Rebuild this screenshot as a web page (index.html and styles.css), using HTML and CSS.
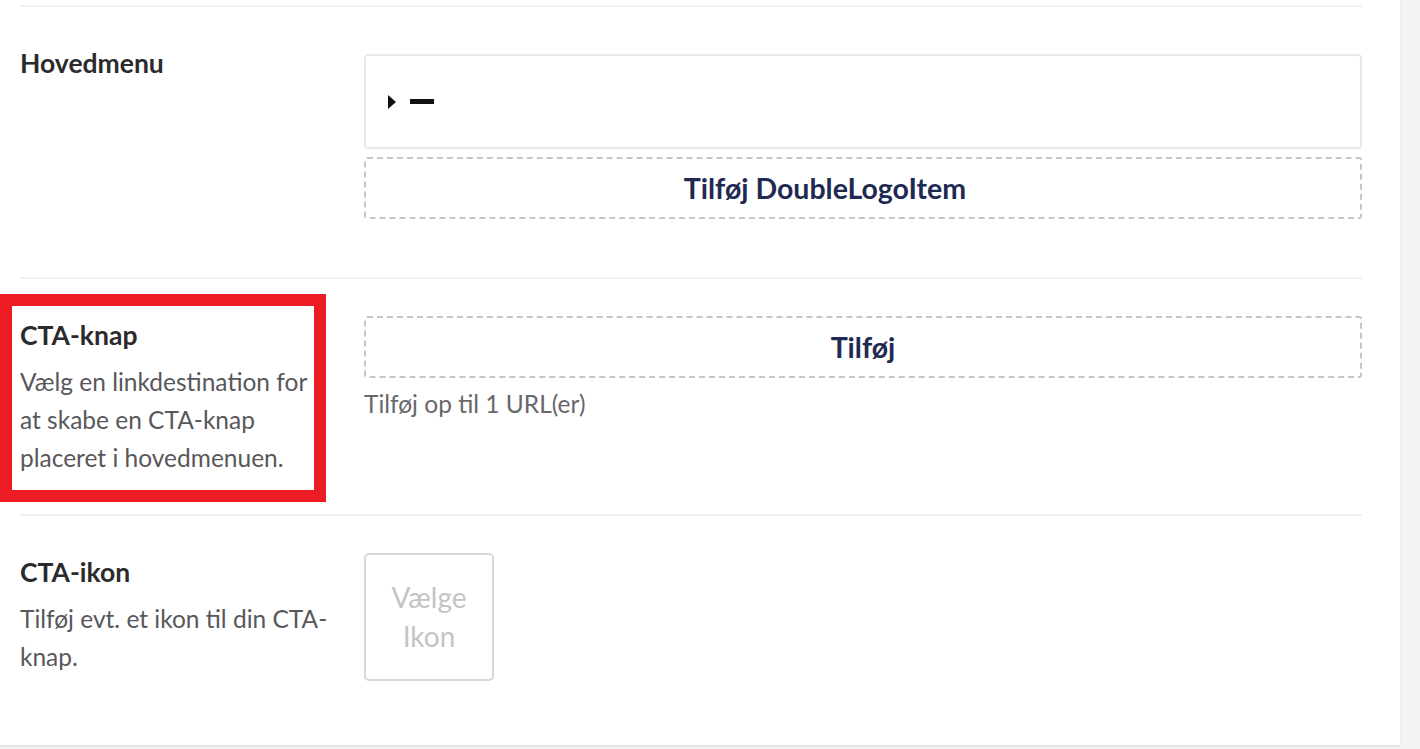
FILE: index.html
```html
<!DOCTYPE html>
<html lang="da">
<head>
<meta charset="utf-8">
<title>Hovedmenu</title>
<link rel="stylesheet" href="styles.css">
</head>
<body>
<div class="panel">
  <div class="rows">
    <div class="row row-first">
      <div class="label-col">
        <div class="label">Hovedmenu</div>
      </div>
      <div class="control-col">
        <div class="nested-box">
          <span class="caret"></span>
          <span class="bar"></span>
        </div>
        <button class="add-btn add-btn-offset">Tilføj DoubleLogoItem</button>
      </div>
    </div>
    <div class="row row-cta">
      <div class="label-col">
        <div class="label">CTA-knap</div>
        <div class="desc">Vælg en linkdestination for at skabe en CTA-knap placeret i hovedmenuen.</div>
      </div>
      <div class="control-col">
        <button class="add-btn">Tilføj</button>
        <div class="help">Tilføj op til 1 URL(er)</div>
      </div>
      <div class="highlight"></div>
    </div>
    <div class="row row-last">
      <div class="label-col">
        <div class="label">CTA-ikon</div>
        <div class="desc">Tilføj evt. et ikon til din CTA-knap.</div>
      </div>
      <div class="control-col">
        <button class="icon-btn">Vælge Ikon</button>
      </div>
    </div>
  </div>
</div>
</body>
</html>
```

FILE: styles.css
```css
* { box-sizing: border-box; }
html, body {
  margin: 0;
  padding: 0;
  height: 100%;
}
body {
  background: #f4f2f2;
  font-family: Lato, "Open Sans", sans-serif;
  color: #1b1b1b;
  overflow: hidden;
}
.panel {
  width: 1401px;
  height: 747px;
  background: #fff;
  border-bottom: 2px solid #e4e4e4;
  border-right: 1px solid #ececec;
  border-bottom-right-radius: 4px;
  padding: 5px 38px 0 20px;
}
.rows {
  border-top: 2px solid #f1f1f1;
}
.row {
  position: relative;
  display: flex;
  border-bottom: 2px solid #f1f1f1;
}
.row-first {
  padding: 47px 0 58px;
}
.row-cta {
  padding: 37px 0 0;
  height: 237px;
}
.row-last {
  border-bottom: none;
  padding: 37px 0 0;
}
.label-col {
  width: 344px;
  flex: none;
  padding-right: 33px;
}
.control-col {
  flex: 1;
  display: flex;
  flex-direction: column;
}
.label {
  font-weight: 700;
  font-size: 26.5px;
  line-height: 30px;
  color: #2b2b2d;
}
.row-first .label {
  margin-top: -6px;
}
.row-cta .label, .row-last .label {
  margin-top: 4px;
}
.desc {
  font-size: 24.5px;
  line-height: 38px;
  color: #58575b;
  margin-top: 13px;
}
.nested-box {
  height: 95px;
  border: 2px solid #e9e9eb;
  border-radius: 4px;
  display: flex;
  align-items: center;
  padding-left: 22px;
}
.caret {
  width: 0;
  height: 0;
  border-top: 7px solid transparent;
  border-bottom: 7px solid transparent;
  border-left: 8px solid #111;
  margin-right: 14px;
}
.bar {
  width: 24px;
  height: 5px;
  background: #111;
}
.add-btn {
  margin-top: 8px;
  height: 62px;
  width: 100%;
  border: 2px dashed #c6c6c6;
  border-radius: 3px;
  background: #fff;
  font-family: Lato, "Open Sans", sans-serif;
  font-weight: 700;
  font-size: 28.5px;
  color: #1f2a52;
  cursor: pointer;
}
.add-btn-offset {
  padding-right: 82px;
}
.row-cta .add-btn {
  margin-top: 0;
}
.help {
  margin-top: 11px;
  font-size: 24.5px;
  line-height: 30px;
  color: #68676b;
}
.icon-btn {
  width: 130px;
  height: 128px;
  border: 2px solid #d8d8d8;
  border-radius: 5px;
  background: #fff;
  font-family: Lato, "Open Sans", sans-serif;
  font-size: 28px;
  line-height: 39px;
  color: #c4c4c4;
  padding: 0 20px;
}
.highlight {
  position: absolute;
  left: -20px;
  top: 15px;
  width: 326px;
  height: 208px;
  border: 12px solid #ed1c24;
  pointer-events: none;
}
```
